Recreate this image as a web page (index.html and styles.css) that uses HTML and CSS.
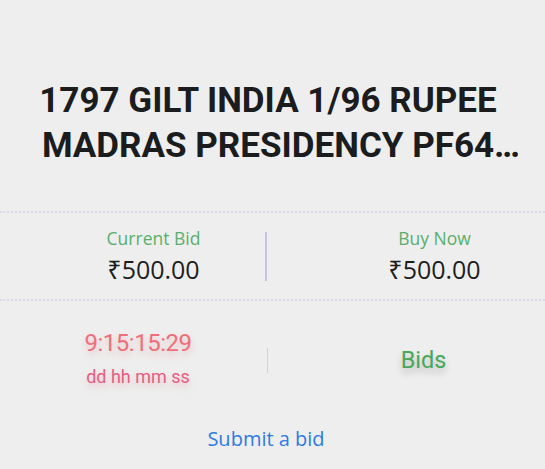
FILE: index.html
```html
<!DOCTYPE html>
<html lang="en">
<head>
<meta charset="utf-8">
<link rel="stylesheet" href="styles.css">
</head>
<body>
<div class="card">
  <h1 class="title">1797 GILT INDIA 1/96 RUPEE MADRAS PRESIDENCY PF64 NGC PROOF RESTRIKE</h1>
  <div class="prices">
    <div class="price-col left">
      <div class="label">Current Bid</div>
      <div class="amount">₹500.00</div>
    </div>
    <div class="vdivider tall"></div>
    <div class="price-col right">
      <div class="label">Buy Now</div>
      <div class="amount">₹500.00</div>
    </div>
  </div>
  <div class="status">
    <div class="timer">
      <div class="time">9:15:15:29</div>
      <div class="units">dd hh mm ss</div>
    </div>
    <div class="vdivider short"></div>
    <div class="bids">Bids</div>
  </div>
  <div class="submit"><a class="submit-link">Submit a bid</a></div>
</div>
</body>
</html>
```

FILE: styles.css
```css
html, body {
  margin: 0;
  padding: 0;
  background: #eeeeee;
}
body {
  font-family: "Open Sans", "Noto Sans", sans-serif;
  overflow: hidden;
}
.card {
  width: 545px;
  padding-top: 78px;
}
.title {
  margin: 0 0 0 18px;
  width: 500px;
  font-family: Roboto, "Noto Sans", sans-serif;
  font-weight: 700;
  font-size: 35px;
  line-height: 45px;
  color: #1b1c1d;
  text-align: center;
  display: -webkit-box;
  -webkit-line-clamp: 2;
  -webkit-box-orient: vertical;
  overflow: hidden;
}
.prices {
  margin-top: 43px;
  border-top: 2px dotted #d9d9ec;
  border-bottom: 2px dotted #d9d9ec;
  display: flex;
  align-items: center;
  height: 86px;
}
.price-col {
  text-align: center;
}
.price-col.left {
  margin-left: 42px;
  width: 223px;
}
.price-col.right {
  flex: 1;
  padding-left: 57px;
}
.label {
  font-size: 17.5px;
  line-height: 24px;
  margin-bottom: 2px;
  color: #5aae6b;
}
.amount {
  font-size: 25px;
  line-height: 34px;
  color: #1e1e1e;
}
.vdivider {
  width: 2px;
  background: #c4c4e0;
}
.vdivider.tall {
  height: 49px;
}
.vdivider.short {
  width: 1px;
  height: 25px;
  background: #cfd0e4;
}
.status {
  display: flex;
  align-items: center;
  height: 118px;
}
.timer {
  margin-left: 9px;
  margin-bottom: 4px;
  width: 258px;
  text-align: center;
  font-family: Roboto, "Noto Sans", sans-serif;
}
.time {
  font-size: 24px;
  line-height: 30px;
  letter-spacing: -0.5px;
  color: #ee6f79;
  text-shadow: 0 4px 6px rgba(230, 110, 120, 0.35);
}
.units {
  margin-top: 7px;
  font-size: 18px;
  line-height: 24px;
  color: #e55e82;
  text-shadow: 0 4px 6px rgba(230, 110, 130, 0.35);
}
.bids {
  flex: 1;
  padding-left: 34px;
  text-align: center;
  font-family: Roboto, "Noto Sans", sans-serif;
  font-size: 23.5px;
  color: #47a85a;
  text-shadow: 0 5px 7px rgba(0, 0, 0, 0.22);
}
.submit {
  text-align: center;
  padding-right: 13px;
  margin-top: 7px;
}
.submit-link {
  font-size: 20px;
  line-height: 26px;
  color: #2e7be3;
  cursor: pointer;
}
```
